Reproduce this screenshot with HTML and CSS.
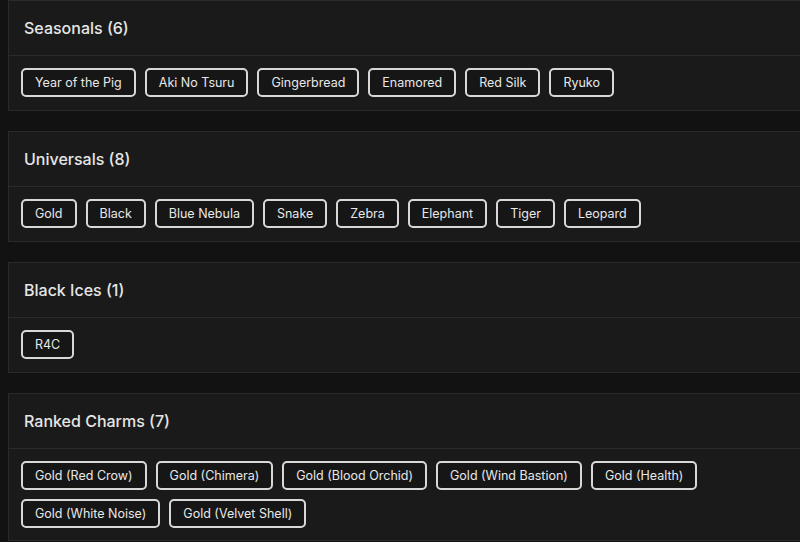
FILE: index.html
```html
<!DOCTYPE html>
<html lang="en">
<head>
    <meta charset="UTF-8">
    <meta name="viewport" content="width=device-width, initial-scale=1.0">
    <title>Skins</title>
    <link rel="stylesheet" href="styles.css">
</head>
<body>

<div class="skin-list">
    <div class="skin-card">
        <div class="skin-card-header">Seasonals (6)</div>
        <div class="skin-card-body">
            <span class="skin-tag">Year of the Pig</span>
            <span class="skin-tag">Aki No Tsuru</span>
            <span class="skin-tag">Gingerbread</span>
            <span class="skin-tag">Enamored</span>
            <span class="skin-tag">Red Silk</span>
            <span class="skin-tag">Ryuko</span>
        </div>
    </div>

    <div class="skin-card">
        <div class="skin-card-header">Universals (8)</div>
        <div class="skin-card-body">
            <span class="skin-tag">Gold</span>
            <span class="skin-tag">Black</span>
            <span class="skin-tag">Blue Nebula</span>
            <span class="skin-tag">Snake</span>
            <span class="skin-tag">Zebra</span>
            <span class="skin-tag">Elephant</span>
            <span class="skin-tag">Tiger</span>
            <span class="skin-tag">Leopard</span>
        </div>
    </div>

    <div class="skin-card">
        <div class="skin-card-header">Black Ices (1)</div>
        <div class="skin-card-body">
            <span class="skin-tag">R4C</span>
        </div>
    </div>

    <div class="skin-card">
        <div class="skin-card-header">Ranked Charms (7)</div>
        <div class="skin-card-body">
            <span class="skin-tag">Gold (Red Crow)</span>
            <span class="skin-tag">Gold (Chimera)</span>
            <span class="skin-tag">Gold (Blood Orchid)</span>
            <span class="skin-tag">Gold (Wind Bastion)</span>
            <span class="skin-tag">Gold (Health)</span>
            <span class="skin-tag">Gold (White Noise)</span>
            <span class="skin-tag">Gold (Velvet Shell)</span>
        </div>
    </div>
</div>

</body>
</html>
```

FILE: styles.css
```css
body {
    font-family: 'Inter', 'Open Sans', sans-serif;
    margin: 0;
    padding: 0;
    background-color: #121212;
    color: #e4e4e4;
    overflow: hidden;
}
.skin-list {
    display: flex;
    flex-direction: column;
    gap: 20px;
    margin-left: 8px;
    width: 810px;
}
.skin-card {
    background-color: #1a1a1a;
    border: 1px solid #2a2a2a;
}
.skin-card-header {
    height: 54px;
    padding-left: 15px;
    display: flex;
    align-items: center;
    font-size: 16px;
    font-weight: 500;
    color: #e6e6e6;
    border-bottom: 1px solid #2a2a2a;
}
.skin-card-body {
    display: flex;
    flex-wrap: wrap;
    gap: 9px 9px;
    padding: 12px 12px;
    min-height: 30px;
}
.skin-tag {
    display: inline-flex;
    align-items: center;
    height: 25px;
    padding: 0 12px;
    border: 2px solid #d8d8d8;
    border-radius: 5px;
    font-size: 12.5px;
    color: #e8e8e8;
    background-color: #161616;
}
```
